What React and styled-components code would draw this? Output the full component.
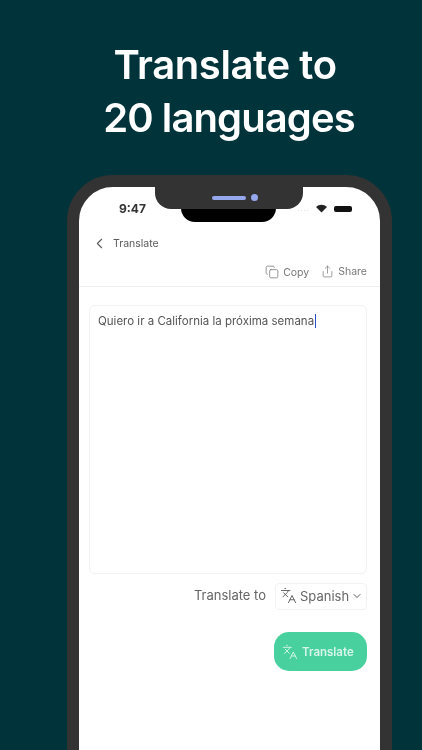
import React from 'react'
import styled, { createGlobalStyle } from 'styled-components'
import { ChevronLeft, ChevronDown, Copy, Share, Languages } from 'lucide-react'

const GlobalStyle = createGlobalStyle`
  html, body {
    margin: 0;
    padding: 0;
    background: #00343a;
  }
`

const Page = styled.div`
  width: 422px;
  height: 750px;
  overflow: hidden;
  background: #00343a;
  font-family: Inter, 'Liberation Sans', sans-serif;
  display: flex;
  flex-direction: column;
`

const Headline = styled.h1`
  margin: 0;
  padding: 38px 0 0 36px;
  height: 175px;
  box-sizing: border-box;
  flex-shrink: 0;
  text-align: center;
  color: #ffffff;
  font-size: 40px;
  line-height: 53px;
  font-weight: 600;
  letter-spacing: -0.9px;
  filter: blur(0.3px);
`

const FirstLine = styled.span`
  display: block;
  padding-right: 8px;
  letter-spacing: -0.4px;
`

const Phone = styled.div`
  position: relative;
  width: 325px;
  height: 640px;
  flex-shrink: 0;
  margin-left: 67px;
  box-sizing: border-box;
  border: 12px solid #333333;
  border-radius: 46px;
  background: #ffffff;
`

const NotchShell = styled.div`
  position: absolute;
  top: -1px;
  left: 76px;
  width: 148px;
  height: 23px;
  padding-left: 12px;
  box-sizing: border-box;
  background: #333333;
  border-radius: 0 0 16px 16px;
  display: flex;
  align-items: center;
  justify-content: center;
  gap: 5px;
  z-index: 2;
`

const Speaker = styled.div`
  width: 34px;
  height: 4px;
  border-radius: 2px;
  background: #95a8ee;
`

const Camera = styled.div`
  width: 7px;
  height: 7px;
  border-radius: 50%;
  background: #95a8ee;
`

const NotchBlack = styled.div`
  position: absolute;
  top: 20px;
  left: 102px;
  width: 95px;
  height: 15px;
  background: #000000;
  border-radius: 0 0 14px 14px;
  z-index: 1;
`

const Screen = styled.div`
  filter: blur(0.7px);
  color: #555555;
`

const StatusBar = styled.div`
  height: 34px;
  box-sizing: border-box;
  padding: 9px 28px 0 40px;
  display: flex;
  justify-content: space-between;
  align-items: center;
`

const Time = styled.span`
  font-size: 12px;
  font-weight: 700;
  color: #333333;
`

const StatusIcons = styled.div`
  display: flex;
  align-items: center;
  gap: 6px;
`

const Dots = styled.span`
  font-size: 6px;
  letter-spacing: 1px;
  color: #bbbbbb;
`

const Battery = styled.div`
  width: 18px;
  height: 6px;
  border-radius: 2px;
  background: #111111;
`

const TitleRow = styled.div`
  height: 42px;
  box-sizing: border-box;
  padding: 2px 0 0 12px;
  display: flex;
  align-items: center;
  gap: 5px;
  font-size: 10.5px;
  color: #5a5a5a;
`

const Actions = styled.div`
  height: 24px;
  box-sizing: border-box;
  padding: 2px 13px 0 0;
  display: flex;
  justify-content: flex-end;
  align-items: flex-start;
  gap: 12px;
  font-size: 10.5px;
  color: #777777;
  border-bottom: 1px solid #eeeeee;
`

const Action = styled.div`
  display: flex;
  align-items: center;
  gap: 4px;
`

const Body = styled.div`
  padding: 18px 13px 0 10px;
`

const TextBox = styled.div`
  height: 269px;
  box-sizing: border-box;
  border: 1px solid #f2f2f2;
  border-radius: 6px;
  padding: 7px 8px;
  font-size: 11.5px;
  line-height: 16px;
  color: #555555;
  white-space: nowrap;
`

const Caret = styled.span`
  display: inline-block;
  width: 1px;
  height: 14px;
  margin-left: 0.5px;
  vertical-align: -3px;
  background: #2a50c8;
`

const TargetRow = styled.div`
  margin-top: 9px;
  display: flex;
  justify-content: flex-end;
  align-items: center;
  gap: 9px;
  font-size: 13px;
  color: #666666;
`

const TargetLabel = styled.span`
  margin-bottom: 3px;
`

const Select = styled.div`
  width: 92px;
  height: 27px;
  box-sizing: border-box;
  border: 1px solid #f2f2f2;
  border-radius: 4px;
  padding: 0 0 2px 4px;
  display: flex;
  align-items: center;
  gap: 3px;
  white-space: nowrap;

  svg:last-child {
    margin-left: -1px;
    color: #333333;
  }
`

const TranslateButton = styled.button`
  display: flex;
  align-items: center;
  gap: 4px;
  margin: 22px 0 0 auto;
  width: 93px;
  height: 39px;
  padding: 0 0 0 8px;
  border: none;
  border-radius: 15px;
  background: #48d19f;
  color: #d8f5ea;
  font-family: inherit;
  font-size: 11.5px;
  font-weight: 600;
`

function App() {
  return (
    <Page>
      <GlobalStyle />
      <Headline>
        <FirstLine>Translate to</FirstLine>
        20 languages
      </Headline>
      <Phone>
        <NotchShell>
          <Speaker />
          <Camera />
        </NotchShell>
        <NotchBlack />
        <Screen>
          <StatusBar>
            <Time>9:47</Time>
            <StatusIcons>
              <Dots>....</Dots>
              <svg width="13" height="9" viewBox="0 0 12 9">
                <path d="M6 8.5 0.5 3a8 8 0 0 1 11 0z" fill="#222222" />
              </svg>
              <Battery />
            </StatusIcons>
          </StatusBar>
          <TitleRow>
            <ChevronLeft size={17} strokeWidth={1.5} />
            Translate
          </TitleRow>
          <Actions>
            <Action>
              <Copy size={14} strokeWidth={1.3} />
              Copy
            </Action>
            <Action>
              <Share size={13} strokeWidth={1.3} />
              Share
            </Action>
          </Actions>
          <Body>
            <TextBox>
              Quiero ir a California la próxima semana
              <Caret />
            </TextBox>
            <TargetRow>
              <TargetLabel>Translate to</TargetLabel>
              <Select>
                <Languages size={17} strokeWidth={1.4} />
                Spanish
                <ChevronDown size={12} strokeWidth={1.6} />
              </Select>
            </TargetRow>
            <TranslateButton type="button">
              <Languages size={16} strokeWidth={1.4} />
              Translate
            </TranslateButton>
          </Body>
        </Screen>
      </Phone>
    </Page>
  )
}

export default App
